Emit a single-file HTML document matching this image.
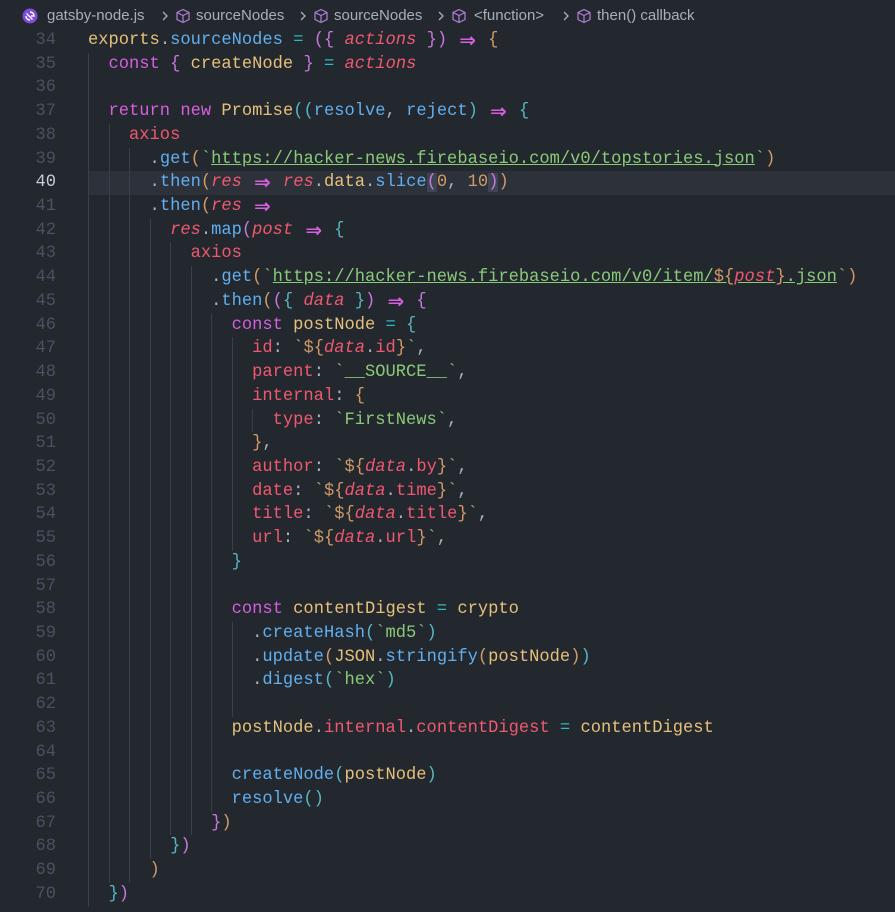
<!DOCTYPE html>
<html><head><meta charset="utf-8"><style>
html,body{margin:0;padding:0;background:#23272e;width:895px;height:912px;overflow:hidden}
.bc{position:absolute;left:0;top:0;width:895px;height:32px;font-family:"Liberation Sans",sans-serif;font-size:15px;color:#a9afba;}
.bc span{position:absolute;top:7px;white-space:nowrap}
.bc svg{position:absolute;top:8px}
.code{position:absolute;left:0;top:29px;font-family:"Liberation Mono",monospace;font-size:17.1px;color:#abb2bf}
.ln{height:23.72px;line-height:23.72px;position:relative;white-space:pre;width:895px}
.ln .n{position:absolute;left:0;width:56px;text-align:right;color:#495162}
.ln .c{position:absolute;left:88px;top:0}
.cur::before{content:"";position:absolute;left:88px;right:0;top:0;bottom:0;background:#2c313a}
.cur .n{color:#c8cdd5}
.i{display:inline-block;width:2ch;height:23.72px;vertical-align:top;box-shadow:inset 1px 0 0 #3b3f4b}
.k{color:#d55fde}.f{color:#61afef}.v{color:#e5c07b}.p{color:#ef596f;font-style:italic}.r{color:#ef596f}
.s{color:#89ca78}.o{color:#2bbac5}.y{color:#d19a66}.m{color:#c678dd}.q{color:#56b6c2}.a{color:#d55fde}
.u{text-decoration:underline;text-decoration-color:#89ca78}
.ar{display:inline-block;width:20.5px;height:23.72px;vertical-align:top;text-align:center;color:#d55fde;font-family:"DejaVu Sans",sans-serif;font-size:20px;font-weight:bold;line-height:23px;overflow:visible}
</style></head><body>
<div class="bc">
<svg style="left:22px" width="16" height="16" viewBox="0 0 16 16"><circle cx="8" cy="8" r="7.5" fill="#7d4cdb"/><path d="M4 8a4 4 0 0 0 4 4M4.5 5.5l6 6M8 4a4 4 0 0 1 4 4h-3" fill="none" stroke="#fff" stroke-width="1.4"/></svg>
<span style="left:47px">gatsby-node.js</span>
<svg style="left:160px" width="10" height="16" viewBox="0 0 10 16"><path d="M3 4l4 4-4 4" fill="none" stroke="#a9afba" stroke-width="1.3"/></svg>
<svg style="left:175px" width="16" height="16" viewBox="0 0 16 16"><path d="M8 1.5l6 3v7l-6 3-6-3v-7zM2 4.5l6 3 6-3M8 7.5v7" fill="none" stroke="#b180d7" stroke-width="1.2"/></svg>
<span style="left:196px">sourceNodes</span>
<svg style="left:298px" width="10" height="16" viewBox="0 0 10 16"><path d="M3 4l4 4-4 4" fill="none" stroke="#a9afba" stroke-width="1.3"/></svg>
<svg style="left:313px" width="16" height="16" viewBox="0 0 16 16"><path d="M8 1.5l6 3v7l-6 3-6-3v-7zM2 4.5l6 3 6-3M8 7.5v7" fill="none" stroke="#b180d7" stroke-width="1.2"/></svg>
<span style="left:334px">sourceNodes</span>
<svg style="left:436px" width="10" height="16" viewBox="0 0 10 16"><path d="M3 4l4 4-4 4" fill="none" stroke="#a9afba" stroke-width="1.3"/></svg>
<svg style="left:451px" width="16" height="16" viewBox="0 0 16 16"><path d="M8 1.5l6 3v7l-6 3-6-3v-7zM2 4.5l6 3 6-3M8 7.5v7" fill="none" stroke="#b180d7" stroke-width="1.2"/></svg>
<span style="left:474px">&lt;function&gt;</span>
<svg style="left:561px" width="10" height="16" viewBox="0 0 10 16"><path d="M3 4l4 4-4 4" fill="none" stroke="#a9afba" stroke-width="1.3"/></svg>
<svg style="left:576px" width="16" height="16" viewBox="0 0 16 16"><path d="M8 1.5l6 3v7l-6 3-6-3v-7zM2 4.5l6 3 6-3M8 7.5v7" fill="none" stroke="#b180d7" stroke-width="1.2"/></svg>
<span style="left:597px">then() callback</span>
</div>
<div class="code">
<div class="ln"><span class="n">34</span><span class="c"><span class="v">exports</span>.<span class="f">sourceNodes</span> <span class="o">=</span> <span class="m">({</span> <span class="p">actions</span> <span class="m">})</span> <span class="ar">⇒</span> <span class="y">{</span></span></div>
<div class="ln"><span class="n">35</span><span class="c"><span class="i"></span><span class="k">const</span> <span class="m">{</span> <span class="v">createNode</span> <span class="m">}</span> <span class="o">=</span> <span class="p">actions</span></span></div>
<div class="ln"><span class="n">36</span><span class="c"><span class="i"></span></span></div>
<div class="ln"><span class="n">37</span><span class="c"><span class="i"></span><span class="k">return</span> <span class="k">new</span> <span class="v">Promise</span><span class="q">((</span><span class="f">resolve</span>, <span class="f">reject</span><span class="q">)</span> <span class="ar">⇒</span> <span class="q">{</span></span></div>
<div class="ln"><span class="n">38</span><span class="c"><span class="i"></span><span class="i"></span><span class="r">axios</span></span></div>
<div class="ln"><span class="n">39</span><span class="c"><span class="i"></span><span class="i"></span><span class="i"></span>.<span class="f">get</span><span class="y">(</span><span class="s">`<span class="u">https://hacker-news.firebaseio.com/v0/topstories.json</span>`</span><span class="y">)</span></span></div>
<div class="ln cur"><span class="n">40</span><span class="c"><span class="i"></span><span class="i"></span><span class="i"></span>.<span class="f">then</span><span class="y">(</span><span class="p">res</span> <span class="ar">⇒</span> <span class="p">res</span>.<span class="v">data</span>.<span class="f">slice</span><span class="m" style="background:#3e4452">(</span><span class="y">0</span>, <span class="y">10</span><span class="m" style="background:#3e4452">)</span><span class="y">)</span></span></div>
<div class="ln"><span class="n">41</span><span class="c"><span class="i"></span><span class="i"></span><span class="i"></span>.<span class="f">then</span><span class="y">(</span><span class="p">res</span> <span class="ar">⇒</span></span></div>
<div class="ln"><span class="n">42</span><span class="c"><span class="i"></span><span class="i"></span><span class="i"></span><span class="i"></span><span class="p">res</span>.<span class="f">map</span><span class="m">(</span><span class="p">post</span> <span class="ar">⇒</span> <span class="q">{</span></span></div>
<div class="ln"><span class="n">43</span><span class="c"><span class="i"></span><span class="i"></span><span class="i"></span><span class="i"></span><span class="i"></span><span class="r">axios</span></span></div>
<div class="ln"><span class="n">44</span><span class="c"><span class="i"></span><span class="i"></span><span class="i"></span><span class="i"></span><span class="i"></span><span class="i"></span>.<span class="f">get</span><span class="y">(</span><span class="s">`<span class="u">https://hacker-news.firebaseio.com/v0/item/<span class="y">${</span><span class="p">post</span><span class="y">}</span>.json</span>`</span><span class="y">)</span></span></div>
<div class="ln"><span class="n">45</span><span class="c"><span class="i"></span><span class="i"></span><span class="i"></span><span class="i"></span><span class="i"></span><span class="i"></span>.<span class="f">then</span><span class="y">(</span><span class="m">(</span><span class="q">{</span> <span class="p">data</span> <span class="q">}</span><span class="m">)</span> <span class="ar">⇒</span> <span class="m">{</span></span></div>
<div class="ln"><span class="n">46</span><span class="c"><span class="i"></span><span class="i"></span><span class="i"></span><span class="i"></span><span class="i"></span><span class="i"></span><span class="i"></span><span class="k">const</span> <span class="v">postNode</span> <span class="o">=</span> <span class="q">{</span></span></div>
<div class="ln"><span class="n">47</span><span class="c"><span class="i"></span><span class="i"></span><span class="i"></span><span class="i"></span><span class="i"></span><span class="i"></span><span class="i"></span><span class="i"></span><span class="r">id</span>: <span class="s">`</span><span class="y">${</span><span class="p">data</span>.<span class="r">id</span><span class="y">}</span><span class="s">`</span>,</span></div>
<div class="ln"><span class="n">48</span><span class="c"><span class="i"></span><span class="i"></span><span class="i"></span><span class="i"></span><span class="i"></span><span class="i"></span><span class="i"></span><span class="i"></span><span class="r">parent</span>: <span class="s">`__SOURCE__`</span>,</span></div>
<div class="ln"><span class="n">49</span><span class="c"><span class="i"></span><span class="i"></span><span class="i"></span><span class="i"></span><span class="i"></span><span class="i"></span><span class="i"></span><span class="i"></span><span class="r">internal</span>: <span class="y">{</span></span></div>
<div class="ln"><span class="n">50</span><span class="c"><span class="i"></span><span class="i"></span><span class="i"></span><span class="i"></span><span class="i"></span><span class="i"></span><span class="i"></span><span class="i"></span><span class="i"></span><span class="r">type</span>: <span class="s">`FirstNews`</span>,</span></div>
<div class="ln"><span class="n">51</span><span class="c"><span class="i"></span><span class="i"></span><span class="i"></span><span class="i"></span><span class="i"></span><span class="i"></span><span class="i"></span><span class="i"></span><span class="y">}</span>,</span></div>
<div class="ln"><span class="n">52</span><span class="c"><span class="i"></span><span class="i"></span><span class="i"></span><span class="i"></span><span class="i"></span><span class="i"></span><span class="i"></span><span class="i"></span><span class="r">author</span>: <span class="s">`</span><span class="y">${</span><span class="p">data</span>.<span class="r">by</span><span class="y">}</span><span class="s">`</span>,</span></div>
<div class="ln"><span class="n">53</span><span class="c"><span class="i"></span><span class="i"></span><span class="i"></span><span class="i"></span><span class="i"></span><span class="i"></span><span class="i"></span><span class="i"></span><span class="r">date</span>: <span class="s">`</span><span class="y">${</span><span class="p">data</span>.<span class="r">time</span><span class="y">}</span><span class="s">`</span>,</span></div>
<div class="ln"><span class="n">54</span><span class="c"><span class="i"></span><span class="i"></span><span class="i"></span><span class="i"></span><span class="i"></span><span class="i"></span><span class="i"></span><span class="i"></span><span class="r">title</span>: <span class="s">`</span><span class="y">${</span><span class="p">data</span>.<span class="r">title</span><span class="y">}</span><span class="s">`</span>,</span></div>
<div class="ln"><span class="n">55</span><span class="c"><span class="i"></span><span class="i"></span><span class="i"></span><span class="i"></span><span class="i"></span><span class="i"></span><span class="i"></span><span class="i"></span><span class="r">url</span>: <span class="s">`</span><span class="y">${</span><span class="p">data</span>.<span class="r">url</span><span class="y">}</span><span class="s">`</span>,</span></div>
<div class="ln"><span class="n">56</span><span class="c"><span class="i"></span><span class="i"></span><span class="i"></span><span class="i"></span><span class="i"></span><span class="i"></span><span class="i"></span><span class="q">}</span></span></div>
<div class="ln"><span class="n">57</span><span class="c"><span class="i"></span><span class="i"></span><span class="i"></span><span class="i"></span><span class="i"></span><span class="i"></span><span class="i"></span></span></div>
<div class="ln"><span class="n">58</span><span class="c"><span class="i"></span><span class="i"></span><span class="i"></span><span class="i"></span><span class="i"></span><span class="i"></span><span class="i"></span><span class="k">const</span> <span class="v">contentDigest</span> <span class="o">=</span> <span class="v">crypto</span></span></div>
<div class="ln"><span class="n">59</span><span class="c"><span class="i"></span><span class="i"></span><span class="i"></span><span class="i"></span><span class="i"></span><span class="i"></span><span class="i"></span><span class="i"></span>.<span class="f">createHash</span><span class="q">(</span><span class="s">`md5`</span><span class="q">)</span></span></div>
<div class="ln"><span class="n">60</span><span class="c"><span class="i"></span><span class="i"></span><span class="i"></span><span class="i"></span><span class="i"></span><span class="i"></span><span class="i"></span><span class="i"></span>.<span class="f">update</span><span class="y">(</span><span class="v">JSON</span>.<span class="f">stringify</span><span class="y">(</span><span class="v">postNode</span><span class="y">)</span><span class="q">)</span></span></div>
<div class="ln"><span class="n">61</span><span class="c"><span class="i"></span><span class="i"></span><span class="i"></span><span class="i"></span><span class="i"></span><span class="i"></span><span class="i"></span><span class="i"></span>.<span class="f">digest</span><span class="q">(</span><span class="s">`hex`</span><span class="q">)</span></span></div>
<div class="ln"><span class="n">62</span><span class="c"><span class="i"></span><span class="i"></span><span class="i"></span><span class="i"></span><span class="i"></span><span class="i"></span><span class="i"></span><span class="i"></span></span></div>
<div class="ln"><span class="n">63</span><span class="c"><span class="i"></span><span class="i"></span><span class="i"></span><span class="i"></span><span class="i"></span><span class="i"></span><span class="i"></span><span class="v">postNode</span>.<span class="r">internal</span>.<span class="r">contentDigest</span> <span class="o">=</span> <span class="v">contentDigest</span></span></div>
<div class="ln"><span class="n">64</span><span class="c"><span class="i"></span><span class="i"></span><span class="i"></span><span class="i"></span><span class="i"></span><span class="i"></span><span class="i"></span></span></div>
<div class="ln"><span class="n">65</span><span class="c"><span class="i"></span><span class="i"></span><span class="i"></span><span class="i"></span><span class="i"></span><span class="i"></span><span class="i"></span><span class="f">createNode</span><span class="q">(</span><span class="v">postNode</span><span class="q">)</span></span></div>
<div class="ln"><span class="n">66</span><span class="c"><span class="i"></span><span class="i"></span><span class="i"></span><span class="i"></span><span class="i"></span><span class="i"></span><span class="i"></span><span class="f">resolve</span><span class="q">()</span></span></div>
<div class="ln"><span class="n">67</span><span class="c"><span class="i"></span><span class="i"></span><span class="i"></span><span class="i"></span><span class="i"></span><span class="i"></span><span class="m">}</span><span class="y">)</span></span></div>
<div class="ln"><span class="n">68</span><span class="c"><span class="i"></span><span class="i"></span><span class="i"></span><span class="i"></span><span class="q">}</span><span class="m">)</span></span></div>
<div class="ln"><span class="n">69</span><span class="c"><span class="i"></span><span class="i"></span><span class="i"></span><span class="y">)</span></span></div>
<div class="ln"><span class="n">70</span><span class="c"><span class="i"></span><span class="q">}</span><span class="m">)</span></span></div>
</div>
</body></html>
